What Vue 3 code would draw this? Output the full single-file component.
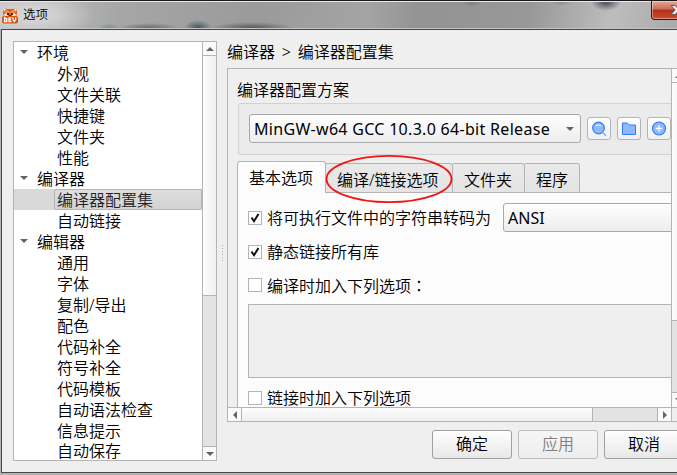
<template>
  <div class="window">
    <header class="titlebar">
      <svg class="app-icon" width="16" height="17" viewBox="0 0 16 17">
        <path d="M1 1l4 1h6l4-1v5l-1 4H2L1 6z" fill="#d9601f" />
        <path d="M1 1l3 1-2 3zM15 1l-3 1 2 3z" fill="#fff0d8" />
        <path d="M4 3h2l1 2h2l1-2h2l1 3H3z" fill="#f09048" />
        <path d="M2 7l3-1 1 3-3 2zM14 7l-3-1-1 3 3 2z" fill="#fbe3c4" />
        <path d="M5 6h2v2H5zM9 6h2v2H9zM7 8h2v1H7z" fill="#55200e" />
        <rect x="0" y="9" width="16" height="7.500" rx="2" fill="#d8500e" />
        <path d="M2.500 9.800v4.700h2.300v-3h-2.300M9.500 10.800h-2.500v3.700h2.500M7 12.700h2M11 10.300v2.200l1.300 2 1.400-2v-2.200" fill="none" stroke="#fff" stroke-width="1.300" />
      </svg>
      <span class="title">选项</span>
      <span class="close">
        <svg width="15" height="12" viewBox="0 0 15 12">
          <path d="M1 1.500h4l2.500 2.500 2.500-2.500h4L9.800 6l4.200 4.500h-4L7.500 8 5 10.500H1L5.200 6z" fill="#f4f4f4" stroke="#555a6b" />
        </svg>
      </span>
    </header>

    <main class="client">
      <div class="body">
        <aside class="tree">
          <ul class="tree-list">
            <li
              v-for="item in treeItems"
              :key="item.label"
              :class="{ group: item.group, selected: item.selected }"
            >
              <i v-if="item.group" class="arrow down"></i>
              <span class="label">{{ item.label }}</span>
            </li>
          </ul>
          <div class="vbar">
            <span class="bar-btn"><i class="arrow up"></i></span>
            <span class="thumb"></span>
            <span class="track"></span>
            <span class="bar-btn last"><i class="arrow down"></i></span>
          </div>
        </aside>

        <div class="splitter"></div>

        <section class="content">
          <h1 class="crumbs">编译器 &gt; 编译器配置集</h1>
          <div class="scroll-area">
            <div class="scroll-row">
              <div class="viewport">
                <div class="group-title">编译器配置方案</div>
                <div class="group-box">
                  <div class="combo scheme">
                    <span class="combo-text">MinGW-w64 GCC 10.3.0 64-bit Release</span>
                    <i class="arrow down"></i>
                  </div>
                  <button class="tool">
                    <svg width="16" height="16" viewBox="0 0 16 16">
                      <circle cx="7.500" cy="7" r="5.800" fill="#8fb8ff" stroke="#2f7df6" stroke-width="1.200" />
                      <path d="M5 4.800q2.500-2 5 0" fill="none" stroke="#fff" />
                      <path d="M11.500 11.300l3.500 3.500" stroke="#6ea4fb" stroke-width="1.300" />
                    </svg>
                  </button>
                  <button class="tool">
                    <svg width="16" height="16" viewBox="0 0 16 16">
                      <path d="M1.500 2h4.800l1.900 2h6.300v9.500h-13z" fill="#8fb8ff" stroke="#2f7df6" stroke-linejoin="round" />
                    </svg>
                  </button>
                  <button class="tool">
                    <svg width="16" height="16" viewBox="0 0 16 16">
                      <circle cx="8" cy="7.500" r="6.500" fill="#8fb8ff" stroke="#2f7df6" stroke-width="1.200" />
                      <path d="M8 4.300v6.400M4.800 7.500h6.400" stroke="#fff" stroke-width="1.300" />
                    </svg>
                  </button>
                </div>

                <nav class="tabs">
                  <div class="tab active">基本选项</div>
                  <div class="tab link-tab">
                    编译/链接选项
                    <svg class="ring" width="128" height="50" viewBox="0 0 128 50">
                      <ellipse cx="64" cy="25" rx="62.500" ry="23.200" fill="none" stroke="#f21414" stroke-width="1.800" />
                    </svg>
                  </div>
                  <div class="tab folder-tab">文件夹</div>
                  <div class="tab program-tab">程序</div>
                  <div class="tab-rest"></div>
                </nav>

                <div class="tab-panel">
                  <div class="option charset">
                    <span class="check"><svg v-bind="tickSize"><path :d="tick" /></svg></span>
                    <span class="option-text">将可执行文件中的字符串转码为</span>
                    <div class="combo ansi"><span class="combo-text">ANSI</span></div>
                  </div>
                  <div class="option static">
                    <span class="check"><svg v-bind="tickSize"><path :d="tick" /></svg></span>
                    <span class="option-text">静态链接所有库</span>
                  </div>
                  <div class="option compile">
                    <span class="check"></span>
                    <span class="option-text">编译时加入下列选项<span class="colon" lang="zh-TW">：</span></span>
                  </div>
                  <div class="textarea"></div>
                  <div class="option link">
                    <span class="check"></span>
                    <span class="option-text">链接时加入下列选项</span>
                  </div>
                </div>
              </div>
              <div class="vbar outer">
                <span class="bar-btn"><i class="arrow up"></i></span>
                <span class="thumb"></span>
                <span class="track"></span>
                <span class="bar-btn last"><i class="arrow down"></i></span>
              </div>
            </div>
            <div class="hbar">
              <span class="h-btn"><i class="arrow left"></i></span>
              <span class="h-thumb"></span>
              <span class="h-track"></span>
              <span class="h-btn right-btn"><i class="arrow right"></i></span>
              <span class="corner"></span>
            </div>
          </div>
          <footer class="actions">
            <button class="btn">确定</button>
            <button class="btn disabled">应用</button>
            <button class="btn">取消</button>
          </footer>
        </section>
      </div>
    </main>
  </div>
</template>

<script setup>
const treeItems = [
  { label: "环境", group: true },
  { label: "外观" },
  { label: "文件关联" },
  { label: "快捷键" },
  { label: "文件夹" },
  { label: "性能" },
  { label: "编译器", group: true },
  { label: "编译器配置集", selected: true },
  { label: "自动链接" },
  { label: "编辑器", group: true },
  { label: "通用" },
  { label: "字体" },
  { label: "复制/导出" },
  { label: "配色" },
  { label: "代码补全" },
  { label: "符号补全" },
  { label: "代码模板" },
  { label: "自动语法检查" },
  { label: "信息提示" },
  { label: "自动保存" },
];

const tickSize = { width: 12, height: 12, viewBox: "0 0 12 12" };
const tick = "M2.500 5.500L5 9.200 9.500 2";
</script>

<style>
body {
  margin: 0;
  overflow: hidden;
}
</style>

<style scoped>
* {
  box-sizing: border-box;
}

.window {
  width: 677px;
  height: 475px;
  overflow: hidden;
  display: flex;
  flex-direction: column;
  background: #b4b4b4;
  border-top: 1px solid #1c1820;
  font: 350 16px/21px "Noto Sans", "Noto Sans CJK SC", sans-serif;
  color: #000;
}

.titlebar {
  flex: none;
  height: 28px;
  display: flex;
  align-items: flex-start;
  border-top: 1px solid #e8e8e8;
  border-bottom: 1px solid #c4c4c4;
  background:
    radial-gradient(ellipse 15px 9px at 606px 0, rgba(70, 70, 82, 0.8) 20%, transparent) no-repeat,
    radial-gradient(ellipse 11px 5px at 472px 0, rgba(90, 90, 96, 0.4), transparent) no-repeat,
    radial-gradient(ellipse 11px 4px at 561px 0, rgba(90, 90, 96, 0.3), transparent) no-repeat,
    radial-gradient(ellipse 14px 8px at 198px 26px, rgba(50, 68, 76, 0.75) 10%, transparent) no-repeat,
    radial-gradient(ellipse 11px 5px at 109px 26px, rgba(80, 130, 145, 0.6), transparent) no-repeat,
    radial-gradient(ellipse 32px 5px at 149px 26px, rgba(70, 70, 70, 0.6), transparent) no-repeat,
    radial-gradient(ellipse 42px 6px at 252px 26px, rgba(60, 60, 60, 0.7), transparent) no-repeat,
    radial-gradient(ellipse 60px 24px at 35px 13px, #dcdcdc, transparent) no-repeat,
    linear-gradient(100deg, #c5c5c5 0, #a6a6a6 18%, #9a9a9a 38%, #a4a4a4 54%, #939393 62%, #989898 78%, #bdbdbd 90%, #aaa 100%) no-repeat;
  background-origin: padding-box;
}

.app-icon {
  flex: none;
  margin: 5px 0 0 2px;
}

.title {
  flex: none;
  margin: 2px 0 0 5px;
  font-size: 12.5px;
  line-height: 21px;
}

.close {
  flex: none;
  width: 44px;
  height: 19px;
  margin: -1px -18px 0 auto;
  padding: 3px 0 0 18px;
  border: 1px solid #3c1614;
  border-top: 0;
  border-radius: 0 0 4px 4px;
  background: linear-gradient(#e5a797, #cb6c58 45%, #b42d18 50%, #cd4b2d);
  box-shadow: inset 0 0 0 1px rgba(255, 255, 255, 0.4);
}

.close svg {
  display: block;
}

.client {
  flex: none;
  height: 444px;
  margin-left: 1px;
  border: 1px solid #484848;
  border-right: 0;
  background: #efefef;
}

.body {
  height: 442px;
  display: flex;
}

.tree {
  flex: none;
  width: 204px;
  height: 420px;
  margin: 11px 0 0 11px;
  display: flex;
  border: 1px solid #b4b4b4;
  background: #fff;
}

.tree-list {
  flex: 1;
  height: 418px;
  margin: 0;
  padding: 0;
  list-style: none;
  overflow: hidden;
}

.tree-list li {
  height: 21px;
  display: flex;
  align-items: center;
  padding-left: 40px;
}

.tree-list li.group {
  padding-left: 6px;
}

.tree-list .arrow {
  margin: -2px 9px 0 0;
}

.label {
  height: 21px;
  padding-left: 3px;
  line-height: 22px;
  white-space: nowrap;
}

.tree-list li:last-child,
.tree-list li:last-child .label {
  height: 19px;
  line-height: 21px;
}

.group .label {
  padding-left: 0;
}

.selected {
  background: #d9d9d9;
}

.selected .label {
  flex: 1;
  padding-left: 2px;
  line-height: 20px;
  border: 1px solid #b5b5b5;
  border-radius: 2px;
  background: linear-gradient(#dedede, #d3d3d3);
  color: #222;
}

.arrow {
  flex: none;
  display: block;
  width: 0;
  height: 0;
  border: 4px solid transparent;
}

.arrow.down {
  border-top-color: #646464;
  border-bottom: 0;
}

.arrow.up {
  border-bottom-color: #646464;
  border-top: 0;
}

.arrow.left {
  border-right-color: #646464;
  border-left: 0;
}

.arrow.right {
  border-left-color: #646464;
  border-right: 0;
}

.vbar {
  flex: none;
  width: 14px;
  display: flex;
  flex-direction: column;
  border-left: 1px solid #b4b4b4;
  background: #e3e3e3;
}

.bar-btn {
  flex: none;
  height: 14px;
  display: flex;
  align-items: center;
  justify-content: center;
  border-bottom: 1px solid #b4b4b4;
  background: #fafafa;
}

.bar-btn.last {
  border-bottom: 0;
  border-top: 1px solid #b4b4b4;
}

.thumb {
  height: 240px;
  border-bottom: 1px solid #b4b4b4;
  background: linear-gradient(90deg, #fdfdfd, #efefef);
}

.track {
  flex: 1;
}

.splitter {
  flex: none;
  width: 3px;
  height: 17px;
  margin: 214px 3px 0 4px;
  background-image: radial-gradient(circle, #aaa 0.6px, transparent 0.8px);
  background-size: 3px 3px;
}

.content {
  flex: none;
  width: 459px;
}

.crumbs {
  height: 38px;
  margin: 0;
  font: inherit;
  line-height: 45px;
  word-spacing: 2.6px;
  white-space: nowrap;
}

.scroll-area {
  width: 459px;
  height: 354px;
  border: 1px solid #b4b4b4;
  border-right: 0;
}

.scroll-row {
  height: 338px;
  display: flex;
}

.viewport {
  flex: none;
  width: 443px;
  height: 338px;
  overflow: hidden;
}

.group-title {
  height: 34px;
  padding-left: 9px;
  line-height: 43px;
}

.group-box {
  width: 500px;
  height: 52px;
  margin-left: 10px;
  padding: 10px 0 0 10px;
  display: flex;
  border: 1px solid #d2d2d2;
  border-radius: 2px;
  background: #ebebeb;
}

.combo {
  flex: none;
  display: flex;
  align-items: center;
  height: 29px;
  padding: 0 6px 0 4px;
  border: 1px solid #a9a9a9;
  border-radius: 3px;
  background: linear-gradient(#fefefe, #ededed);
}

.combo-text {
  flex: 1;
  padding-top: 1px;
  line-height: 23px;
  font-weight: 400;
  white-space: nowrap;
}

.scheme {
  width: 332px;
  margin-right: 6px;
}

.scheme .combo-text {
  letter-spacing: 0.3px;
}

.tool {
  flex: none;
  width: 24px;
  height: 23px;
  margin: 3px 6px 0 0;
  padding: 0;
  display: flex;
  align-items: center;
  justify-content: center;
  border: 1px solid #b4b4b4;
  border-radius: 3px;
  background: linear-gradient(#fff, #f0f0f0);
}

.tabs {
  height: 38px;
  margin-left: 9px;
  padding-top: 6px;
  display: flex;
  align-items: flex-end;
}

.tab {
  position: relative;
  flex: none;
  height: 30px;
  padding-left: 11px;
  line-height: 32px;
  border: 1px solid #b4b4b4;
  border-left: 0;
  border-radius: 0 3px 0 0;
  background: linear-gradient(#e9e9e9, #e4e4e4);
  white-space: nowrap;
}

.tab.active {
  width: 89px;
  height: 32px;
  line-height: 33px;
  border-left: 1px solid #b4b4b4;
  border-bottom: 0;
  border-radius: 3px 3px 0 0;
  background: #fcfcfc;
}

.link-tab {
  width: 127px;
}

.folder-tab {
  width: 72px;
}

.program-tab {
  width: 55px;
}

.tab-rest {
  flex: 1;
  border-bottom: 1px solid #b4b4b4;
}

.ring {
  position: absolute;
  left: -1px;
  top: -10px;
  z-index: 1;
}

.tab-panel {
  height: 260px;
  margin-left: 9px;
  padding: 10px 0 0 10px;
  border-left: 1px solid #b4b4b4;
  background: #fcfcfc;
}

.option {
  display: flex;
  align-items: center;
}

.charset {
  height: 29px;
}

.static {
  height: 21px;
  margin-top: 9px;
}

.compile {
  height: 21px;
  margin-top: 12px;
}

.link {
  height: 21px;
  margin-top: 9px;
}

.check {
  flex: none;
  width: 14px;
  height: 14px;
  border: 1px solid #b4b4b4;
  background: #fff;
}

.check svg {
  display: block;
}

.check path {
  fill: none;
  stroke: #111;
  stroke-width: 2;
}

.option-text {
  margin-left: 5px;
  padding-top: 1px;
  line-height: 22px;
  white-space: nowrap;
}

.colon {
  font-family: "Noto Sans CJK TC", sans-serif;
}

.ansi {
  width: 220px;
  margin-left: 12px;
}

.textarea {
  width: 500px;
  height: 74px;
  margin-top: 9px;
  border: 1px solid #b4b4b4;
  background: #efefef;
}

.outer .thumb {
  height: 238px;
}

.outer {
  width: 15px;
}

.outer .bar-btn.last {
  height: 15px;
}

.hbar {
  height: 14px;
  display: flex;
  border-top: 1px solid #b4b4b4;
  background: #e3e3e3;
}

.h-btn {
  flex: none;
  width: 14px;
  display: flex;
  align-items: center;
  justify-content: center;
  border-right: 1px solid #b4b4b4;
  background: #fafafa;
}

.h-thumb {
  flex: none;
  width: 351px;
  border-right: 1px solid #b4b4b4;
  background: linear-gradient(#fdfdfd, #efefef);
}

.h-track {
  flex: none;
  width: 64px;
}

.right-btn {
  width: 15px;
  border-left: 1px solid #b4b4b4;
}

.corner {
  flex: 1;
  background: #efefef;
}

.actions {
  display: flex;
  gap: 6px;
  padding: 8px 0 0 205px;
}

.btn {
  flex: none;
  width: 80px;
  height: 29px;
  padding: 0;
  font: inherit;
  line-height: 27px;
  color: #000;
  border: 1px solid #a0a0a0;
  border-radius: 3px;
  background: linear-gradient(#fefefe, #e8e8e8);
}

.btn.disabled {
  color: #808080;
  border-color: #bebebe;
  background: linear-gradient(#f6f6f6, #ededed);
}
</style>
